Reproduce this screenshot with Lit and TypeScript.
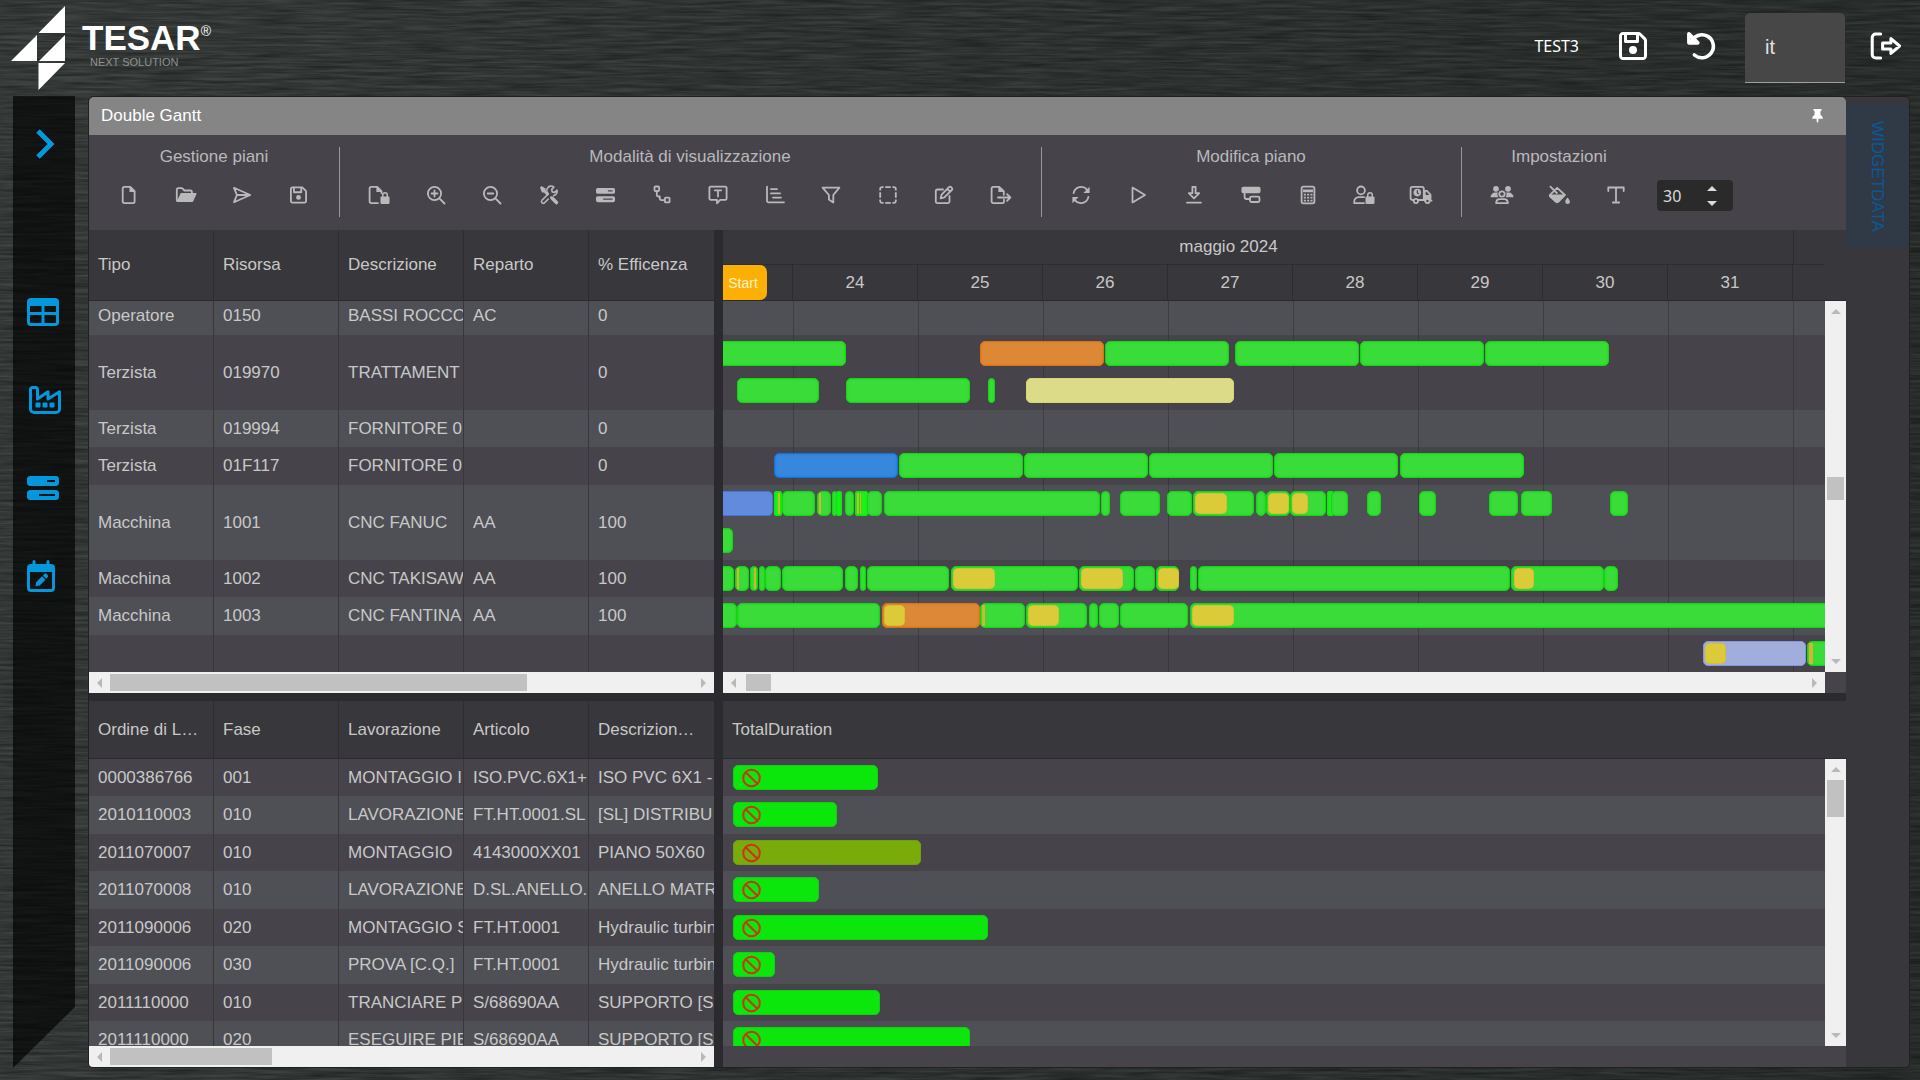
import { LitElement, html, svg, css, nothing } from "lit";
import { customElement } from "lit/decorators.js";
import { styleMap } from "lit/directives/style-map.js";
import { classMap } from "lit/directives/class-map.js";

type Icon = { w: number; h: number; body: unknown };

const floppy = svg`<path fill="currentColor" stroke="none" d="M48 96V416c0 8.8 7.2 16 16 16H384c8.8 0 16-7.2 16-16V170.5c0-4.2-1.7-8.3-4.7-11.3l33.9-33.9c12 12 18.7 28.3 18.7 45.3V416c0 35.3-28.7 64-64 64H64c-35.3 0-64-28.7-64-64V96C0 60.7 28.7 32 64 32H309.5c17 0 33.3 6.7 45.3 18.7l74.5 74.5-33.9 33.9L320.8 84.7c-.3-.3-.5-.5-.8-.8V184c0 13.3-10.7 24-24 24H104c-13.3 0-24-10.7-24-24V80H64c-8.8 0-16 7.2-16 16zm80-16v80H272V80H128zm32 240a64 64 0 1 1 128 0 64 64 0 1 1 -128 0z"/>`;
const progress = svg`<path fill="currentColor" stroke="none" fill-rule="evenodd" d="M448 160H320V128H448v32zM48 64C21.5 64 0 85.5 0 112v64c0 26.5 21.5 48 48 48H464c26.5 0 48-21.5 48-48V112c0-26.5-21.5-48-48-48H48zM448 352v32H192V352H448zM48 288c-26.5 0-48 21.5-48 48v64c0 26.5 21.5 48 48 48H464c26.5 0 48-21.5 48-48V336c0-26.5-21.5-48-48-48H48z"/>`;
const solid = (d: string) => svg`<path fill="currentColor" stroke="none" fill-rule="evenodd" d=${d}/>`;
const line = (d: string) => svg`<path d=${d}/>`;
const padlock = solid("M14 11.5v-1.5a3 3 0 0 1 6 0v1.5h.6a.9.9 0 0 1 .9.9v5.4a1.2 1.2 0 0 1-1.2 1.2h-6.600a1.200 1.200 0 0 1-1.200-1.200v-5.400a.9.9 0 0 1 .9-.9zM15.500 11.500h3v-1.500a1.500 1.500 0 0 0-3 0z");

const icons: Record<string, Icon> = {
  file: { w: 20, h: 20, body: svg`${line("M5.300 1.900h6l4.300 4.300v10.300a1.600 1.600 0 0 1-1.600 1.600h-8.700a1.600 1.600 0 0 1-1.600-1.600v-13a1.600 1.600 0 0 1 1.600-1.600z")}${solid("M10.500 1.500v5.500h5.700z")}` },
  folder: { w: 22, h: 20, body: svg`${line("M1.800 15.500V4.500a1.300 1.300 0 0 1 1.300-1.300h4l2.300 2.300h6.200a1.300 1.300 0 0 1 1.300 1.300V8")}${solid("M5.800 8H20.600a.9.9 0 0 1 .8 1.300l-3.200 6.900a1.600 1.600 0 0 1-1.400.9H1.500z")}` },
  send: { w: 20, h: 20, body: line("M2 2.800 18.300 10 2 17.200 4.900 10zM5 10h12") },
  save: { w: 448, h: 512, body: floppy },
  fileLock: { w: 22, h: 20, body: svg`${line("M10 18.100H3.200a1.600 1.600 0 0 1-1.600-1.600v-13a1.600 1.600 0 0 1 1.600-1.600h6l4.300 4.300v2")}${solid("M8.400 1.500v5.500h5.700z")}${padlock}` },
  zoomIn: { w: 20, h: 20, body: svg`<circle cx="8.500" cy="8.500" r="6.600"/>${line("M13.400 13.400 18.500 18.500M8.500 5.500v6M5.500 8.500h6")}` },
  zoomOut: { w: 20, h: 20, body: svg`<circle cx="8.500" cy="8.500" r="6.600"/>${line("M13.400 13.400 18.500 18.500M5.700 8.500h5.600")}` },
  tools: { w: 20, h: 20, body: svg`${solid("M1 2.600 2.700 1l4 2.800v2.200l3.300 3.200-1.700 1.700L5 7.600H3zM11.400 11.600c1.200-.6 2.300-.3 3.100.5l4.200 4.200a1.700 1.700 0 0 1-2.500 2.500l-4.200-4.200c-.8-.8-1.100-2-.6-3z")}<path stroke-width="1.600" d="M3 15.200 9.400 8.800a4.300 4.300 0 0 1 5.500-6.700l-2.200 2.300.5 2.500 2.500.5 2.300-2.200a4.300 4.300 0 0 1-3.300 5.400M3 15.200a1.800 1.800 0 0 0 2.600 2.600L9.300 14"/>` },
  progress: { w: 512, h: 512, body: progress },
  flow: { w: 20, h: 20, body: svg`<rect x="2.500" y="1.500" width="4.600" height="4.600" rx="1"/><rect x="12.800" y="12.600" width="4.800" height="4.800" rx="1"/>${line("M4.800 6v4a1.500 1.500 0 0 0 1.500 1.500h1.500v2a1.600 1.600 0 0 0 1.600 1.600h3.400")}` },
  note: { w: 20, h: 20, body: svg`${line("M2.600 1.600h14.800a1.200 1.200 0 0 1 1.200 1.200v10.800a1.200 1.200 0 0 1-1.200 1.200h-5.200L9 18.400v-3.600H2.600a1.200 1.200 0 0 1-1.200-1.200V2.800a1.200 1.200 0 0 1 1.200-1.200z")}${line("M6.800 5.300h6.400M10 5.300v6.200")}` },
  gantt: { w: 20, h: 20, body: line("M2 1.700v14a1.600 1.600 0 0 0 1.600 1.600H19M6 4.200h6M6 8.400h9M8 12.600h8") },
  filter: { w: 20, h: 20, body: line("M1.600 2.600h16.800L12.300 10v7.400l-4.400-3V10z") },
  select: { w: 20, h: 20, body: svg`<path stroke-linecap="butt" d="M2.200 5.500V4a1.800 1.800 0 0 1 1.800-1.800h1.500M7.200 2.200h5.600M14.500 2.200H16A1.800 1.800 0 0 1 17.800 4v1.500M17.800 7.200v5.600M17.800 14.500V16a1.800 1.800 0 0 1-1.800 1.800h-1.500M12.800 17.800H7.200M5.500 17.800H4A1.800 1.800 0 0 1 2.200 16v-1.500M2.200 12.800V7.200"/>` },
  edit: { w: 20, h: 20, body: svg`${line("M9 4.500H3.600A1.800 1.800 0 0 0 1.800 6.300v10.100a1.800 1.800 0 0 0 1.800 1.800h10.100a1.800 1.800 0 0 0 1.800-1.800V11")}${line("M6.600 13.400 7.600 9.600 15 2.200a1.500 1.500 0 0 1 2.200 0l.6.600a1.500 1.500 0 0 1 0 2.200L10.400 12.400zM13.400 3.900l2.700 2.700")}` },
  export: { w: 22, h: 20, body: svg`${line("M14 14.600v1.900a1.600 1.600 0 0 1-1.600 1.600H3.200a1.600 1.600 0 0 1-1.600-1.600v-13a1.600 1.600 0 0 1 1.600-1.600h6l4.600 4.300v3.600")}${solid("M8.400 1.500v5.500h5.700z")}${line("M8 12.500h12M17 9.200l3.400 3.300L17 15.800")}` },
  refresh: { w: 20, h: 20, body: svg`${line("M2.600 8.200A7.700 7.700 0 0 1 16 4.600M17.400 11.800A7.700 7.700 0 0 1 4 15.400")}${solid("M18.600 1.800V8h-6.200zM1.400 18.200V12h6.200z")}` },
  play: { w: 20, h: 20, body: line("M4.500 2.600v14.800L17 10z") },
  download: { w: 20, h: 20, body: line("M8.400 1.800h3.200v6.400h3.600L10 13.400 4.800 8.200h3.600zM3 17.600h14") },
  subtask: { w: 20, h: 20, body: svg`<rect x=".5" y="1.800" width="19" height="6.400" rx="1.600" fill="currentColor" stroke="none"/>${line("M3.600 8v4a2 2 0 0 0 2 2H9")}<rect x="9" y="11.600" width="9.500" height="5.400" rx="1.400"/>` },
  calc: { w: 20, h: 20, body: svg`<rect x="3.600" y="1.600" width="12.800" height="16.800" rx="1.800"/>${solid("M5 4.600h10v2.600H5z")}<path stroke-width="1.900" stroke-linecap="butt" stroke-dasharray="2.100 1.200" d="M5.800 9.600h9M5.800 12.600h9M5.800 15.600h9"/>` },
  userLock: { w: 22, h: 20, body: svg`<circle cx="8" cy="5.400" r="3.900"/>${line("M11 12.200H6A4.500 4.500 0 0 0 1.200 16.800v1.300H11")}${padlock}` },
  truck: { w: 24, h: 20, body: svg`${line("M4.200 15H3.400A1.800 1.800 0 0 1 1.600 13.200V3.600a1.800 1.800 0 0 1 1.800-1.800H13a1.800 1.800 0 0 1 1.800 1.800V15H9.400")}${solid("M15 5h3.400l4 4.600V15h.9v1.500h-1.600a3 3 0 0 0-5.800 0H15zM16.700 6.700v3.200h3.700l-2.800-3.200z")}<circle cx="8.300" cy="7.600" r="3.800" fill="currentColor" stroke="none"/><circle cx="6.900" cy="16" r="2.100"/><circle cx="18.500" cy="16" r="2.100"/><path class="cut" d="M8.300 5.600v2.300l1.300.8"/>` },
  users: { w: 24, h: 20, body: svg`<g fill="currentColor" stroke="none"><circle cx="6" cy="3.800" r="2.900"/><circle cx="18" cy="3.800" r="2.900"/><path d="M.5 12.200A4.700 4.700 0 0 1 5.200 7.600h2.600a5 5 0 0 0 .5 4.600zM23.500 12.200a4.700 4.700 0 0 0-4.700-4.600h-2.600a5 5 0 0 1-.5 4.600z"/></g><circle cx="12" cy="9" r="2.700"/>${line("M9.600 14.200h4.800a3.200 3.200 0 0 1 3.200 2.600l.3 1.300H6.100l.3-1.300a3.200 3.200 0 0 1 3.200-2.600z")}` },
  fill: { w: 22, h: 20, body: svg`${line("M2.400 1.600 8.800 8M1.800 10.200 9.200 2.800l7.700 7.200-6.500 6.700a1.800 1.800 0 0 1-2.600 0l-5.600-5.200a1 1 0 0 1-.4-1.300z")}${solid("M2 9.400h15.500l-7 7.900a2 2 0 0 1-2.900 0l-6-5.800zM19.500 12.500s2.500 2.900 2.500 4.200a2.400 2.400 0 0 1-4.800 0c0-1.300 2.300-4.200 2.300-4.200z")}` },
  letter: { w: 20, h: 20, body: line("M2.300 6V2.500h15.400V6M10 2.500v15M6.800 17.500h6.400") },
  undo: { w: 512, h: 512, body: svg`<g stroke-width="58">${line("M100 190A184 184 0 1 1 150 400")}${line("M62 62 205 205H62z")}</g>` },
  logout: { w: 576, h: 512, body: svg`<g stroke-width="56">${line("M190 36H100a64 64 0 0 0-64 64v312a64 64 0 0 0 64 64h90")}${line("M378 120 536 256 378 392V312H226V200h152z")}</g>` },
  pin: { w: 12, h: 16, body: solid("M1.500 0h9v2l-1.300.8.4 4.400a3.200 3.200 0 0 1 2.400 3.100v.8H7V14l-1 2-1-2v-2.900H0v-.8a3.200 3.200 0 0 1 2.400-3.100l.4-4.400L1.500 2z") },
  chevron: { w: 19, h: 30, body: svg`<path stroke-width="5" stroke-linejoin="miter" stroke-linecap="butt" d="M2 2 15 15 2 28"/>` },
  table: { w: 512, h: 512, body: solid("M64 32h384a64 64 0 0 1 64 64v320a64 64 0 0 1-64 64H64a64 64 0 0 1-64-64V96a64 64 0 0 1 64-64zM48 160v96h184v-96zM280 160v96h184v-96zM48 304v112a16 16 0 0 0 16 16h168V304zM280 304v128h168a16 16 0 0 0 16-16V304z") },
  factory: { w: 32, h: 28, body: svg`<path stroke-width="3" d="M1.500 23V3.500a2 2 0 0 1 2-2H6.500a2 2 0 0 1 2 2V13L19 5.800V13l11.500-7.200V23a3.500 3.500 0 0 1-3.500 3.500H5A3.500 3.500 0 0 1 1.500 23z"/><g fill="currentColor" stroke="none"><rect x="6.500" y="16.500" width="5" height="5" rx="1"/><rect x="13.500" y="16.500" width="5" height="5" rx="1"/><rect x="20.500" y="16.500" width="5" height="5" rx="1"/></g>` },
  calendar: { w: 28, h: 32, body: svg`${solid("M7 0a1.500 1.500 0 0 1 1.500 1.500V4h11V1.500a1.500 1.500 0 0 1 3 0V4H24a4 4 0 0 1 4 4v20a4 4 0 0 1-4 4H4a4 4 0 0 1-4-4V8a4 4 0 0 1 4-4h1.500V1.500A1.500 1.500 0 0 1 7 0zM3 12v16a1 1 0 0 0 1 1h20a1 1 0 0 0 1-1V12z")}${solid("M8.500 26.200 9.300 22l5.700-5.700 3.400 3.400L12.700 25.400zM15.900 15.400l1-1a2.300 2.300 0 0 1 3.400 3.400l-1 1z")}` },
};

const icon = (name: string, width: number, height: number) => {
  const i = icons[name];
  return html`<svg class="icon" width=${width} height=${height} viewBox="0 0 ${i.w} ${i.h}" aria-hidden="true">${i.body}</svg>`;
};

type Tool = [name: string, label: string, width?: number];
const toolGroups: { title: string; tools: Tool[] }[] = [
  { title: "Gestione piani", tools: [["file", "Nuovo"], ["folder", "Apri", 22], ["send", "Invia"], ["save", "Salva"]] },
  {
    title: "Modalità di visualizzazione",
    tools: [["fileLock", "Blocca", 22], ["zoomIn", "Ingrandisci"], ["zoomOut", "Riduci"], ["tools", "Strumenti"], ["progress", "Barre"], ["flow", "Legami"], ["note", "Testo"], ["gantt", "Gantt"], ["filter", "Filtra"], ["select", "Seleziona"], ["edit", "Modifica"], ["export", "Esporta", 22]],
  },
  { title: "Modifica piano", tools: [["refresh", "Aggiorna"], ["play", "Avvia"], ["download", "Scarica"], ["subtask", "Attività"], ["calc", "Calcola"], ["userLock", "Blocca risorsa", 22], ["truck", "Consegne", 24]] },
  { title: "Impostazioni", tools: [["users", "Operatori", 24], ["fill", "Colori", 22], ["letter", "Carattere"]] },
];

/* Bars are [start, end, tone, inner start, inner end] in timeline pixels. */
type Bar = [number, number, string, number?, number?];
const ORIGIN = 723;
const resources: { cells: string[]; height: number; lanes: Bar[][] }[] = [
  { cells: ["Operatore", "0150", "BASSI ROCCO", "AC", "0"], height: 34, lanes: [] },
  {
    cells: ["Terzista", "019970", "TRATTAMENT", "", "0"], height: 75,
    lanes: [
      [[711, 846, "green"], [980, 1104, "orange"], [1105, 1229, "green"], [1235, 1359, "green"], [1360, 1484, "green"], [1485, 1609, "green"]],
      [[737, 819, "green"], [846, 970, "green"], [988, 995, "green"], [1026, 1234, "sand"]],
    ],
  },
  { cells: ["Terzista", "019994", "FORNITORE 0", "", "0"], height: 37, lanes: [] },
  {
    cells: ["Terzista", "01F117", "FORNITORE 0", "", "0"], height: 38,
    lanes: [[[774, 898, "blue"], [899, 1023, "green"], [1024, 1148, "green"], [1149, 1273, "green"], [1274, 1398, "green"], [1400, 1524, "green"]]],
  },
  {
    cells: ["Macchina", "1001", "CNC FANUC", "AA", "100"], height: 75,
    lanes: [
      [
        [711, 773, "slate"], [774, 782, "bright", 778, 780], [782, 815, "green"], [817, 831, "green", 819, 821], [832, 837, "green"], [836, 842, "bright"], [845, 854, "green"],
        [855, 863, "bright", 857, 859], [859, 868, "bright", 860, 861], [867, 882, "green"], [884, 1100, "green"], [1101, 1110, "green"], [1120, 1160, "green"], [1167, 1192, "green"],
        [1193, 1254, "green", 1195, 1227], [1256, 1266, "green"], [1266, 1290, "green", 1268, 1289], [1290, 1326, "green", 1292, 1308], [1327, 1334, "bright"], [1331, 1348, "green"],
        [1367, 1381, "green"], [1419, 1436, "green"], [1489, 1518, "green"], [1521, 1552, "green"], [1610, 1628, "green"],
      ],
      [[711, 733, "green"]],
    ],
  },
  {
    cells: ["Macchina", "1002", "CNC TAKISAW", "AA", "100"], height: 37,
    lanes: [[
      [711, 734, "green"], [735, 749, "green", 737, 739], [750, 758, "green", 754, 756], [759, 765, "green"], [765, 781, "green"], [782, 843, "green"], [845, 858, "green"], [860, 866, "green"],
      [867, 949, "green"], [951, 1078, "green", 953, 995], [1079, 1134, "green", 1081, 1123], [1135, 1155, "green"], [1156, 1179, "green", 1158, 1179], [1190, 1197, "green"],
      [1198, 1510, "green"], [1511, 1604, "green", 1514, 1534], [1604, 1618, "green"],
    ]],
  },
  {
    cells: ["Macchina", "1003", "CNC FANTINA", "AA", "100"], height: 38,
    lanes: [[
      [711, 737, "green"], [737, 880, "green"], [882, 980, "orange", 884, 905], [980, 1025, "green", 982, 985], [1026, 1087, "green", 1028, 1059], [1089, 1098, "green"],
      [1099, 1119, "green"], [1120, 1188, "green"], [1190, 1860, "green", 1192, 1234],
    ]],
  },
  { cells: ["", "", "", "", ""], height: 75, lanes: [[[1703, 1806, "lavender", 1705, 1726], [1807, 1860, "green", 1809, 1813]]] },
];

const orders: { cells: string[]; height: number; total: number; late?: boolean }[] = [
  { cells: ["0000386766", "001", "MONTAGGIO I", "ISO.PVC.6X1+", "ISO PVC 6X1 -"], height: 37, total: 145 },
  { cells: ["2010110003", "010", "LAVORAZIONE", "FT.HT.0001.SL", "[SL] DISTRIBU"], height: 38, total: 104 },
  { cells: ["2011070007", "010", "MONTAGGIO", "4143000XX01", "PIANO 50X60"], height: 37, total: 188, late: true },
  { cells: ["2011070008", "010", "LAVORAZIONE", "D.SL.ANELLO.", "ANELLO MATR"], height: 38, total: 86 },
  { cells: ["2011090006", "020", "MONTAGGIO S", "FT.HT.0001", "Hydraulic turbin"], height: 37, total: 255 },
  { cells: ["2011090006", "030", "PROVA [C.Q.]", "FT.HT.0001", "Hydraulic turbin"], height: 38, total: 42 },
  { cells: ["2011110000", "010", "TRANCIARE P", "S/68690AA", "SUPPORTO [S"], height: 37, total: 147 },
  { cells: ["2011110000", "020", "ESEGUIRE PIE", "S/68690AA", "SUPPORTO [S"], height: 38, total: 237 },
];

@customElement("app-root")
export class AppRoot extends LitElement {
  static styles = css`
    :host {
      display: grid;
      grid-template-rows: 96px minmax(0, 1fr);
      height: 100vh;
      position: relative;
      overflow: hidden;
      box-sizing: border-box;
      padding-bottom: 12px;
      background: linear-gradient(100deg, #414745 0%, #3a403e 35%, #363c3a 65%, #303634 100%);
      color: #c8c8c8;
      font: 17px/20px "Liberation Sans", Arial, sans-serif;
    }
    *, *::before, *::after { box-sizing: border-box; }
    button, select, input { font: inherit; color: inherit; margin: 0; border: 0; padding: 0; background: none; }
    button { cursor: pointer; display: flex; align-items: center; justify-content: center; }
    .texture { position: absolute; inset: 0; width: 100%; height: 100%; pointer-events: none; }
    .icon { display: block; flex: none; overflow: visible; fill: none; stroke: currentColor; stroke-width: 1.8; stroke-linejoin: round; stroke-linecap: round; }
    .cut { stroke: #46444a; stroke-width: 1.2; }

    .topbar { position: relative; display: flex; align-items: center; color: #fff; }
    .brand { display: flex; align-items: flex-start; height: 96px; padding: 6px 0 0 11px; color: #fff; text-decoration: none; }
    .mark { display: block; fill: #fff; }
    .wordmark { display: grid; grid-template-columns: auto auto; padding: 15px 0 0 16px; }
    .name { font-weight: bold; font-size: 35px; line-height: 34px; }
    .reg { font-size: 14px; line-height: 16px; padding-top: 2px; }
    .tagline { grid-column: 1 / -1; padding-left: 8px; font-size: 11px; line-height: 14px; color: #8e9190; }
    .actions { display: flex; align-items: flex-start; height: 100%; margin-left: auto; }
    .user { padding: 34px 20px 0 0; font: 16px/24px "Noto Sans", sans-serif; }
    .action { width: 68px; height: 92px; }
    .lang { appearance: none; width: 100px; height: 70px; margin: 13px 7px 0 10px; padding: 0 0 2px 20px; border-bottom: 1px solid #a0a0a0; border-radius: 5px 5px 0 0; background: #474747; color: #e2e2e2; font-size: 20px; }

    .body { position: relative; display: grid; grid-template-columns: 62px minmax(0, 1fr); gap: 13px; padding: 0 10px 0 13px; min-height: 0; }
    .side { background: rgba(0, 0, 0, 0.66); clip-path: polygon(0 0, 100% 0, 100% calc(100% - 61px), 0 100%); color: #0597dc; }
    .side button { width: 100%; height: 88px; padding-left: 14px; justify-content: flex-start; }
    .side .toggle { height: 96px; margin-bottom: 76px; padding-left: 23px; }
    .side .inset { padding-left: 16px; }

    .panel { display: grid; grid-template-columns: minmax(0, 1fr) 63px; min-height: 0; border: 1px solid #202122; border-radius: 5px; overflow: hidden; background: #38373b; }
    .widget { display: grid; grid-template-rows: 38px 95px minmax(0, 1fr); min-height: 0; }
    .title { display: flex; align-items: center; justify-content: space-between; padding: 0 23px 0 12px; border-radius: 5px 5px 0 0; background: #858585; color: #fff; }
    .title h1 { margin: 0; font: inherit; }
    .rail { padding: 7px 1px 0 0; }
    .tab { width: 100%; height: 144px; border-radius: 5px; background: #303a46; color: #0a5898; writing-mode: vertical-rl; text-decoration: none; display: flex; align-items: center; justify-content: center; line-height: 62px; }

    .toolbar { display: grid; grid-template-columns: 250px 702px 420px 196px 1fr; background: #46444a; color: #b9b9bb; }
    .group { position: relative; padding: 12px 12px 0; text-align: center; }
    .group + .group::before { content: ""; position: absolute; left: 0; top: 12px; width: 1px; height: 70px; background: #98989b; }
    .group h2 { margin: 0 0 6px; font: inherit; }
    .tools { display: flex; }
    .tools button { flex: 1 1 56px; min-width: 56px; height: 44px; }
    .zoom { display: flex; align-items: center; width: 76px; height: 31px; margin-top: 45px; padding-left: 6px; border-radius: 4px; background: #2a2a2b; color: #dcdcdc; }
    .zoom input { width: 40px; appearance: textfield; -moz-appearance: textfield; font: 16px/24px "Noto Sans", sans-serif; outline: 0; }
    .zoom input::-webkit-inner-spin-button { appearance: none; margin: 0; }
    .spin { display: grid; gap: 4px; }
    .spin button { width: 18px; height: 11px; }
    .spin svg { fill: currentColor; display: block; }

    .work { display: grid; grid-template: minmax(0, 463fr) minmax(0, 366fr) / 625px minmax(0, 1fr); gap: 8px 9px; background: #2b2a2f; min-height: 0; }
    .pane { display: grid; grid-template-rows: minmax(0, 1fr) 21px; min-width: 0; min-height: 0; background: #46444a; }
    .clip { overflow: hidden; min-height: 0; min-width: 0; }
    .pane.chart { grid-template: auto minmax(0, 1fr) 21px / minmax(0, 1fr) 21px; }
    .chart > .head { grid-column: 1 / -1; }

    table { width: 100%; table-layout: fixed; border-spacing: 0; }
    th, td { padding: 0 14px 0 9px; overflow: hidden; white-space: nowrap; text-align: left; font-weight: normal; border-right: 1px solid #38373b; }
    td { padding-right: 0; }
    th { height: 71px; background: #38373b; text-overflow: ellipsis; border-color: #2e2d31; border-bottom: 1px solid #2b2a2f; }
    .low th { height: 58px; }
    th:last-child, td:last-child { border-right: 0; }
    .odd { background: #4f5055; }
    .resources tbody tr:first-child td { padding-bottom: 5px; }

    .head { background: #38373b; border-bottom: 1px solid #2b2a2f; overflow: hidden; }
    .months, .days { display: flex; }
    .months { height: 35px; border-bottom: 1px solid #2d2c30; margin-right: 21px; }
    .month { flex: none; width: 1130px; margin-left: -59px; text-align: center; line-height: 34px; border-right: 1px solid #2d2c30; }
    .days { position: relative; height: 35px; }
    .day { flex: none; width: 125px; text-align: center; line-height: 35px; border-right: 1px solid #2d2c30; }
    .day.first { width: 70px; }
    .start { position: absolute; left: 0; top: 0; width: 44px; height: 35px; border-radius: 0 7px 7px 0; background: #fcb006; color: #fff0c4; font-size: 14px; line-height: 36px; text-align: center; padding-right: 4px; }
    .total { height: 58px; padding-left: 9px; line-height: 57px; }

    .canvas { position: relative; }
    .canvas::before { content: ""; position: absolute; inset: 0; background: repeating-linear-gradient(90deg, transparent 0 124px, rgba(40, 38, 44, 0.42) 124px 125px); background-position-x: 71px; background-size: 125px 100%; }
    .row { padding-top: 6px; overflow: hidden; }
    .lane { position: relative; height: 37px; }
    .bar { position: absolute; top: 0; height: 25px; border: 1px solid #12d812; border-radius: 5px; background: #39dc39; box-shadow: inset 0 0 2px #12d812; }
    .bar.bright { background: #1af21a; border-color: #08ec08; border-radius: 2px; }
    .bar.orange { background: #dc8837; border-color: #dd7410; box-shadow: inset 0 0 2px #dd7410; }
    .bar.sand { background: #dcdb87; border-color: #d8d672; box-shadow: none; }
    .bar.blue { background: #3787dc; border-color: #1272de; box-shadow: inset 0 0 2px #1272de; }
    .bar.slate { background: #628bdd; border-color: #4474de; box-shadow: none; }
    .bar.lavender { background: #a1aedc; border-color: #8697e0; box-shadow: none; }
    .setup { position: absolute; top: 1px; height: 21px; border-radius: 5px; border: 1px dotted #dcb02c; background: #dccb39; }
    .setup.thin { border: 0; border-radius: 0; background: #d3b62e; }
    .duration { display: flex; align-items: center; height: 25px; margin-left: 10px; padding-left: 8px; border: 1px solid #12cf16; border-radius: 5px; background: #0be60b; }
    .duration.late { background: #79ab0b; border-color: #739f16; }
    .ban { display: block; fill: none; stroke: #cf3212; stroke-width: 2; }

    .scroll { display: flex; align-items: center; background: #f0f0f0; color: #b9b9b9; }
    .scroll.vertical { flex-direction: column; }
    .scroll button { width: 21px; height: 21px; flex: none; }
    .scroll svg { fill: currentColor; display: block; }
    .track { flex: 1; align-self: stretch; padding: 2px 0; }
    .vertical .track { padding: 0 2px; }
    .thumb { height: 100%; background: #c1c1c1; }
  `;

  private scrollbar(vertical: boolean, offset: number, size: number, label: string) {
    const thumb = vertical ? { marginTop: `${offset}px`, height: `${size}px` } : { marginLeft: `${offset}px`, width: `${size}px` };
    const back = vertical ? "0,5 5,0 10,5" : "5,0 0,5 5,10";
    const next = vertical ? "0,0 5,5 10,0" : "0,0 5,5 0,10";
    const w = vertical ? 10 : 5;
    const h = vertical ? 5 : 10;
    return html`<div class=${classMap({ scroll: true, vertical })}>
      <button aria-label="${label} indietro"><svg width=${w} height=${h}><polygon points=${back}></polygon></svg></button>
      <div class="track"><div class="thumb" style=${styleMap(thumb)}></div></div>
      <button aria-label="${label} avanti"><svg width=${w} height=${h}><polygon points=${next}></polygon></svg></button>
    </div>`;
  }

  private grid(cls: string, heads: string[], rows: { cells: string[]; height: number }[], parity: number) {
    return html`<div class="clip"><table class=${cls}>
      <thead><tr>${heads.map((h) => html`<th scope="col">${h}</th>`)}</tr></thead>
      <tbody>${rows.map((r, i) => html`<tr class=${i % 2 === parity ? "odd" : ""} style=${styleMap({ height: `${r.height}px` })}>${r.cells.map((c) => html`<td>${c}</td>`)}</tr>`)}</tbody>
    </table></div>`;
  }

  private bar([from, to, tone, a, b]: Bar) {
    const inner = a !== undefined && b !== undefined
      ? html`<span class=${classMap({ setup: true, thin: b - a < 6 })} style=${styleMap({ left: `${a - from - 1}px`, width: `${b - a}px` })}></span>`
      : nothing;
    return html`<div class="bar ${tone}" style=${styleMap({ left: `${from - ORIGIN}px`, width: `${to - from}px` })}>${inner}</div>`;
  }

  render() {
    return html`
      <svg class="texture" aria-hidden="true">
        <filter id="grain" x="0" y="0" width="100%" height="100%">
          <feTurbulence type="fractalNoise" baseFrequency="0.02 0.36" numOctaves="3" seed="7"></feTurbulence>
          <feColorMatrix values="0 0 0 0 0  0 0 0 0 0  0 0 0 0 0  0.7 0 0 0 -0.15"></feColorMatrix>
        </filter>
        <rect width="100%" height="100%" filter="url(#grain)"></rect>
      </svg>

      <header class="topbar">
        <a class="brand" href="#">
          <svg class="mark" width="55" height="85" viewBox="0 0 55 85" aria-hidden="true">
            <path d="M54 0v27H27.500zM26 29v26H0zM54 29v26H28zM27.500 57H54L27.500 84z"></path>
          </svg>
          <span class="wordmark"><span class="name">TESAR</span><span class="reg">®</span><span class="tagline">NEXT SOLUTION</span></span>
        </a>
        <div class="actions">
          <span class="user">TEST3</span>
          <button class="action" aria-label="Salva">${icon("save", 28, 32)}</button>
          <button class="action" aria-label="Annulla">${icon("undo", 32, 32)}</button>
          <select class="lang" aria-label="Lingua"><option>it</option></select>
          <button class="action" aria-label="Esci">${icon("logout", 32, 28)}</button>
        </div>
      </header>

      <div class="body">
        <nav class="side">
          <button class="toggle" aria-label="Espandi">${icon("chevron", 19, 30)}</button>
          <button aria-label="Tabelle">${icon("table", 32, 32)}</button>
          <button class="inset" aria-label="Produzione">${icon("factory", 32, 28)}</button>
          <button aria-label="Gantt">${icon("progress", 32, 32)}</button>
          <button aria-label="Calendario">${icon("calendar", 28, 32)}</button>
        </nav>

        <main class="panel">
          <section class="widget">
            <div class="title"><h1>Double Gantt</h1><button aria-label="Fissa">${icon("pin", 11, 14)}</button></div>
            <div class="toolbar">
              ${toolGroups.map((g) => html`<div class="group"><h2>${g.title}</h2><div class="tools">
                ${g.tools.map(([name, label, w]) => html`<button aria-label=${label}>${icon(name, name === "save" ? 17 : name === "progress" ? 19 : w ?? 20, 20)}</button>`)}
              </div></div>`)}
              <div class="zoom">
                <input type="number" aria-label="Altezza riga" .value=${"30"} />
                <div class="spin">
                  <button aria-label="Aumenta"><svg width="10" height="5"><polygon points="0,5 5,0 10,5"></polygon></svg></button>
                  <button aria-label="Diminuisci"><svg width="10" height="5"><polygon points="0,0 5,5 10,0"></polygon></svg></button>
                </div>
              </div>
            </div>

            <div class="work">
              <div class="pane">
                ${this.grid("resources", ["Tipo", "Risorsa", "Descrizione", "Reparto", "% Efficenza"], resources, 0)}
                ${this.scrollbar(false, 0, 417, "Risorse")}
              </div>
              <div class="pane chart">
                <div class="head">
                  <div class="months"><div class="month">maggio 2024</div></div>
                  <div class="days">
                    <div class="day first"></div>
                    ${[24, 25, 26, 27, 28, 29, 30, 31].map((d) => html`<div class="day">${d}</div>`)}
                    <div class="start">Start</div>
                  </div>
                </div>
                <div class="clip canvas">
                  ${resources.map((r, i) => html`<div class="row ${i % 2 ? "" : "odd"}" style=${styleMap({ height: `${r.height}px` })}>
                    ${r.lanes.map((lane) => html`<div class="lane">${lane.map((b) => this.bar(b))}</div>`)}
                  </div>`)}
                </div>
                ${this.scrollbar(true, 155, 23, "Righe")}
                ${this.scrollbar(false, 2, 25, "Giorni")}
              </div>
              <div class="pane">
                ${this.grid("low", ["Ordine di Lavoro", "Fase", "Lavorazione", "Articolo", "Descrizione articolo"], orders, 1)}
                ${this.scrollbar(false, 0, 162, "Ordini")}
              </div>
              <div class="pane chart">
                <div class="head total">TotalDuration</div>
                <div class="clip">
                  ${orders.map((o, i) => html`<div class="row ${i % 2 ? "odd" : ""}" style=${styleMap({ height: `${o.height}px` })}>
                    <div class="duration ${o.late ? "late" : ""}" style=${styleMap({ width: `${o.total}px` })}>
                      <svg class="ban" width="20" height="20" viewBox="0 0 20 20" aria-hidden="true"><circle cx="9.500" cy="10" r="8.300"></circle><path d="M3.600 4.200 15.400 15.800"></path></svg>
                    </div>
                  </div>`)}
                </div>
                ${this.scrollbar(true, 0, 37, "Durate")}
              </div>
            </div>
          </section>
          <aside class="rail"><a class="tab" href="#">WIDGETDATA</a></aside>
        </main>
      </div>
    `;
  }
}
